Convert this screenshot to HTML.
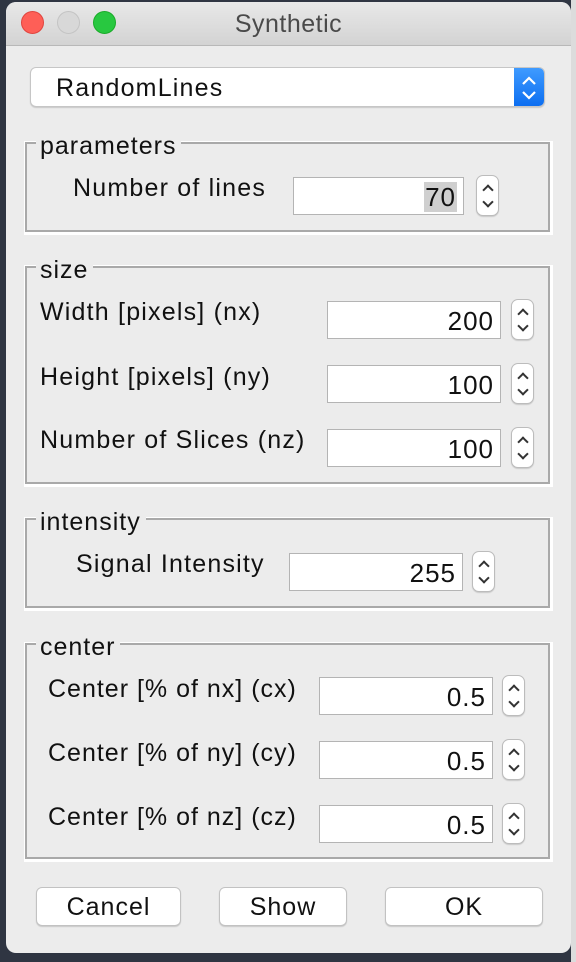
<!DOCTYPE html>
<html><head><meta charset="utf-8"><style>
*{margin:0;padding:0;box-sizing:border-box}
body{width:576px;height:962px;background:#2f3542;position:relative;overflow:hidden;font-family:"Liberation Sans",sans-serif;color:#111}
.win{position:absolute;left:6px;top:2px;width:565px;height:951px;background:#ececec;border-radius:10px;overflow:hidden}
.tb{position:absolute;left:0;top:0;width:100%;height:44px;background:linear-gradient(#e8e8e8,#d3d3d3);border-bottom:1px solid #b8b8b8}
.dot{position:absolute;top:9px;width:23px;height:23px;border-radius:50%}
.title{position:absolute;left:0;width:100%;top:8px;text-align:center;font-size:25px;color:#4a4a4a;letter-spacing:.5px}
.a{position:absolute}
.t{position:absolute;font-size:25px;line-height:30px;letter-spacing:1.2px;white-space:nowrap}
.g{position:absolute;border:2px solid #a9a9a9;box-shadow:1px 1px 0 2px #fff}
.gl{position:absolute;background:#ececec;padding:0 5px 0 4px;font-size:25px;line-height:30px;letter-spacing:1px}
.f{position:absolute;background:#fff;border:1px solid #b4b4b4;font-size:26px;text-align:right;padding-right:6px;line-height:38px;letter-spacing:1px}
.sp{position:absolute;width:23px;height:41px;background:#fff;border:1px solid #bcbcbc;border-radius:7px;box-shadow:0 1px 1px rgba(0,0,0,.15)}
.sp::before{content:"";position:absolute;left:7px;top:10px;width:6px;height:6px;border-left:2px solid #333;border-top:2px solid #333;transform:rotate(45deg)}
.sp::after{content:"";position:absolute;left:7px;top:22px;width:6px;height:6px;border-right:2px solid #333;border-bottom:2px solid #333;transform:rotate(45deg)}
.b{position:absolute;top:887px;height:39px;background:#fff;border:1px solid #c2c2c2;border-radius:6px;box-shadow:0 1px 1px rgba(0,0,0,.15);font-size:25px;text-align:center;line-height:39px;letter-spacing:1px}
</style></head><body>
<div class="a" style="left:571px;top:0;width:5px;height:962px;background:#dcdcdc"></div>
<div class="win">
<div class="tb">
<div class="dot" style="left:15px;background:#fe5f57;border:1px solid #e0443e"></div>
<div class="dot" style="left:51px;background:#d8d8d8;border:1px solid #c4c4c4"></div>
<div class="dot" style="left:87px;background:#28c840;border:1px solid #1aab29"></div>
<div class="title">Synthetic</div>
</div>
</div>
<div class="a" style="left:30px;top:67px;width:515px;height:40px;background:#fff;border:1px solid #c6c6c6;border-radius:6px;box-shadow:0 1px 1px rgba(0,0,0,.15);overflow:hidden">
<div class="t" style="left:25px;top:5px;letter-spacing:1.2px">RandomLines</div>
<div class="a" style="right:0;top:0;width:30px;height:40px;background:linear-gradient(#3f9bff,#0a6cf0)">
<svg width="30" height="40"><path d="M9 16l6-6 6 6M9 24l6 6 6-6" stroke="#fff" stroke-width="2.2" fill="none"/></svg></div>
</div>

<div class="g" style="left:25px;top:142px;width:525px;height:90px"></div>
<div class="gl" style="left:36px;top:131px">parameters</div>
<div class="t" style="left:73px;top:173px">Number of lines</div>
<div class="f" style="left:293px;top:177px;width:171px;height:38px"><span style="background:#cfcfcf;padding:0 1px">70</span></div>
<div class="sp" style="left:476px;top:175px"></div>

<div class="g" style="left:25px;top:266px;width:525px;height:218px"></div>
<div class="gl" style="left:36px;top:255px">size</div>
<div class="t" style="left:40px;top:297px">Width [pixels] (nx)</div>
<div class="t" style="left:40px;top:362px">Height [pixels] (ny)</div>
<div class="t" style="left:40px;top:425px">Number of Slices (nz)</div>
<div class="f" style="left:327px;top:301px;width:174px;height:38px">200</div>
<div class="f" style="left:327px;top:365px;width:174px;height:38px">100</div>
<div class="f" style="left:327px;top:429px;width:174px;height:38px">100</div>
<div class="sp" style="left:511px;top:299px"></div>
<div class="sp" style="left:511px;top:363px"></div>
<div class="sp" style="left:511px;top:427px"></div>

<div class="g" style="left:25px;top:518px;width:525px;height:90px"></div>
<div class="gl" style="left:36px;top:507px">intensity</div>
<div class="t" style="left:76px;top:549px">Signal Intensity</div>
<div class="f" style="left:289px;top:553px;width:174px;height:38px">255</div>
<div class="sp" style="left:472px;top:551px"></div>

<div class="g" style="left:25px;top:643px;width:525px;height:216px"></div>
<div class="gl" style="left:36px;top:632px">center</div>
<div class="t" style="left:48px;top:674px;letter-spacing:1px">Center [% of nx] (cx)</div>
<div class="t" style="left:48px;top:738px;letter-spacing:1px">Center [% of ny] (cy)</div>
<div class="t" style="left:48px;top:802px;letter-spacing:1px">Center [% of nz] (cz)</div>
<div class="f" style="left:319px;top:677px;width:174px;height:38px">0.5</div>
<div class="f" style="left:319px;top:741px;width:174px;height:38px">0.5</div>
<div class="f" style="left:319px;top:805px;width:174px;height:38px">0.5</div>
<div class="sp" style="left:502px;top:675px"></div>
<div class="sp" style="left:502px;top:739px"></div>
<div class="sp" style="left:502px;top:803px"></div>

<div class="b" style="left:36px;width:145px">Cancel</div>
<div class="b" style="left:219px;width:128px">Show</div>
<div class="b" style="left:385px;width:158px">OK</div>
</body></html>
